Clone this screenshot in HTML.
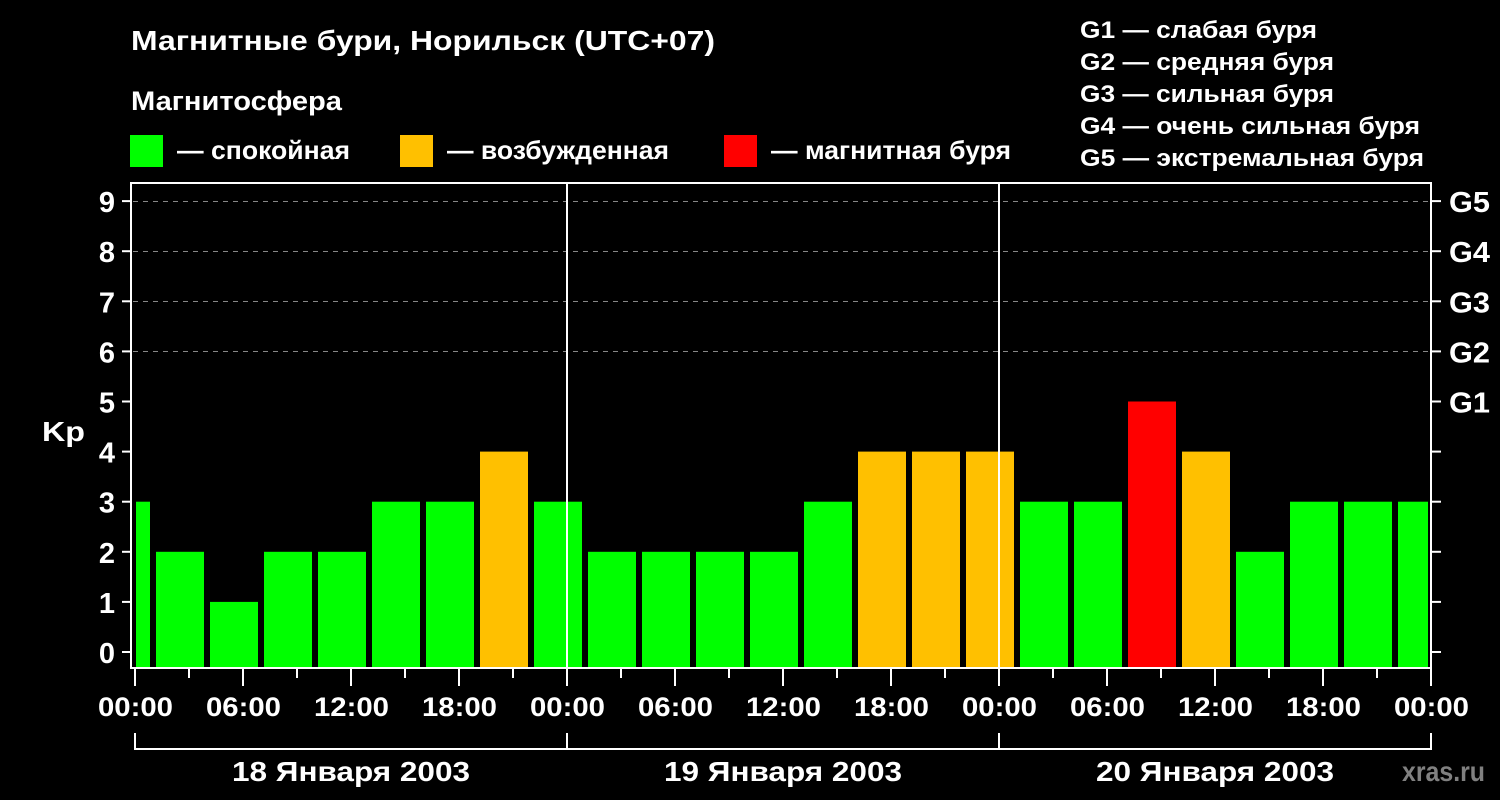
<!DOCTYPE html><html><head><meta charset="utf-8"><style>body{margin:0;background:#000}svg{display:block}text{font-family:"Liberation Sans",Arial,sans-serif;font-weight:bold;fill:#fff}</style></head><body>
<svg width="1500" height="800" xmlns="http://www.w3.org/2000/svg">
<rect width="1500" height="800" fill="#000"/>
<text x="131" y="50" font-size="28" textLength="584" lengthAdjust="spacingAndGlyphs">Магнитные бури, Норильск (UTC+07)</text>
<text x="131" y="110" font-size="27" textLength="211" lengthAdjust="spacingAndGlyphs">Магнитосфера</text>
<rect x="130" y="135" width="33" height="32" fill="#00ff00"/>
<text x="177" y="159" font-size="26" textLength="173" lengthAdjust="spacingAndGlyphs">— спокойная</text>
<rect x="400" y="135" width="33" height="32" fill="#ffc000"/>
<text x="447" y="159" font-size="26" textLength="222" lengthAdjust="spacingAndGlyphs">— возбужденная</text>
<rect x="724" y="135" width="33" height="32" fill="#ff0000"/>
<text x="771" y="159" font-size="26" textLength="240" lengthAdjust="spacingAndGlyphs">— магнитная буря</text>
<g font-size="24" lengthAdjust="spacingAndGlyphs">
<text x="1080" y="38" textLength="237" lengthAdjust="spacingAndGlyphs">G1 — слабая буря</text>
<text x="1080" y="70" textLength="254" lengthAdjust="spacingAndGlyphs">G2 — средняя буря</text>
<text x="1080" y="102" textLength="254" lengthAdjust="spacingAndGlyphs">G3 — сильная буря</text>
<text x="1080" y="134" textLength="340" lengthAdjust="spacingAndGlyphs">G4 — очень сильная буря</text>
<text x="1080" y="166" textLength="344" lengthAdjust="spacingAndGlyphs">G5 — экстремальная буря</text>
</g>
<g stroke="#888" stroke-width="1" stroke-dasharray="5,5">
<line x1="133" y1="201.5" x2="1430" y2="201.5"/><line x1="133" y1="251.5" x2="1430" y2="251.5"/><line x1="133" y1="301.5" x2="1430" y2="301.5"/><line x1="133" y1="351.5" x2="1430" y2="351.5"/>
</g>
<g id="bars"></g>
<g stroke="#fff" stroke-width="2" fill="none">
<rect x="131" y="183" width="1300" height="485"/>
<line x1="567" y1="183" x2="567" y2="668"/><line x1="999" y1="183" x2="999" y2="668"/>
<polyline points="135,733 135,749 1431,749 1431,733"/>
<line x1="567" y1="733" x2="567" y2="749"/><line x1="999" y1="733" x2="999" y2="749"/>
</g>
<g id="ticks" stroke="#fff" stroke-width="2"></g>
<g id="labels"></g>
<text x="42" y="441" font-size="28" textLength="43" lengthAdjust="spacingAndGlyphs">Kp</text>
<g font-size="28">
<text x="232" y="781" textLength="238" lengthAdjust="spacingAndGlyphs">18 Января 2003</text>
<text x="664" y="781" textLength="238" lengthAdjust="spacingAndGlyphs">19 Января 2003</text>
<text x="1096" y="781" textLength="238" lengthAdjust="spacingAndGlyphs">20 Января 2003</text>
</g>
<text x="1402" y="781" font-size="28" textLength="83" lengthAdjust="spacingAndGlyphs" style="fill:#808080">xras.ru</text>
<script>
var v=[3,2,1,2,2,3,3,4,3,2,2,2,2,3,4,4,4,3,3,5,4,2,3,3,3];
var ns="http://www.w3.org/2000/svg",b=document.getElementById('bars'),t=document.getElementById('ticks'),l=document.getElementById('labels');
function el(p,n,a){var e=document.createElementNS(ns,n);for(var k in a)e.setAttribute(k,a[k]);p.appendChild(e);return e;}
v.forEach(function(x,k){var x0=102+54*k,x1=x0+48;x0=Math.max(x0,136);x1=Math.min(x1,1428);var top=652-x*50.1;
el(b,'rect',{x:x0,y:top,width:x1-x0,height:668-top,fill:x>=5?'#ff0000':x==4?'#ffc000':'#00ff00'});});
for(var i=0;i<=9;i++){var y=652-i*50.1;el(t,'line',{x1:122,y1:y,x2:131,y2:y});el(t,'line',{x1:1431,y1:y,x2:1441,y2:y});
var tx=el(l,'text',{x:115,y:y+11,'font-size':29,'text-anchor':'end'});tx.textContent=i;
if(i>=5){var g=el(l,'text',{x:1449,y:y+11,'font-size':29,textLength:41,lengthAdjust:'spacingAndGlyphs'});g.textContent='G'+(i-4);}}
var hl=['00:00','06:00','12:00','18:00'];
for(var j=0;j<=24;j++){var x=135+54*j;el(t,'line',{x1:x,y1:668,x2:x,y2:j%2?678:686});
if(j%2==0){var s=el(l,'text',{x:x-37,y:716,'font-size':27,textLength:75,lengthAdjust:'spacingAndGlyphs'});s.textContent=hl[(j/2)%4];}}
</script>
</svg></body></html>
